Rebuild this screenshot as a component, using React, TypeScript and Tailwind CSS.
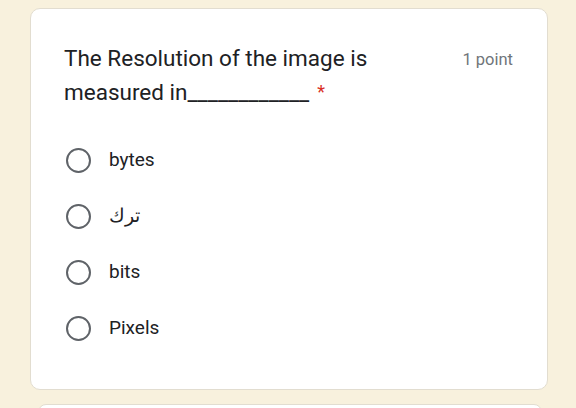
import React from "react";

function Radio() {
  return (
    <span className="inline-block w-[25px] h-[25px] rounded-full border-[2.5px] border-[#5f6368] shrink-0" />
  );
}

export default function App() {
  const options = ["bytes", "ترك", "bits", "Pixels"];
  return (
    <div className="w-[576px] h-[408px] bg-[#f8f1dd] overflow-hidden pt-[8px] font-['Roboto',sans-serif]">
      <div className="ml-[30px] w-[518px] h-[382px] bg-white rounded-[10px] border border-[#e2ddd0] pl-[33px] pr-[34px] pt-[32px]">
        <div className="flex justify-between items-start">
          <div className="text-[22.5px] leading-[34px] text-[#202124]">
            The Resolution of the image is
            <br />
            measured in____________
            <span className="text-[#d93025] ml-[8px] text-[18px] align-top">*</span>
          </div>
          <div className="text-[16.5px] text-[#70757a] mt-[7px]">1 point</div>
        </div>
        <div className="mt-[23px] flex flex-col">
          {options.map((o) => (
            <div key={o} className="h-[56px] flex items-center gap-[18px] pl-[2px]">
              <Radio />
              <span className="text-[19px] text-[#202124]">{o}</span>
            </div>
          ))}
        </div>
      </div>
      <div className="ml-[38px] w-[504px] h-[20px] mt-[14px] bg-white border border-[#e2ddd0] rounded-[8px]" />
    </div>
  );
}
